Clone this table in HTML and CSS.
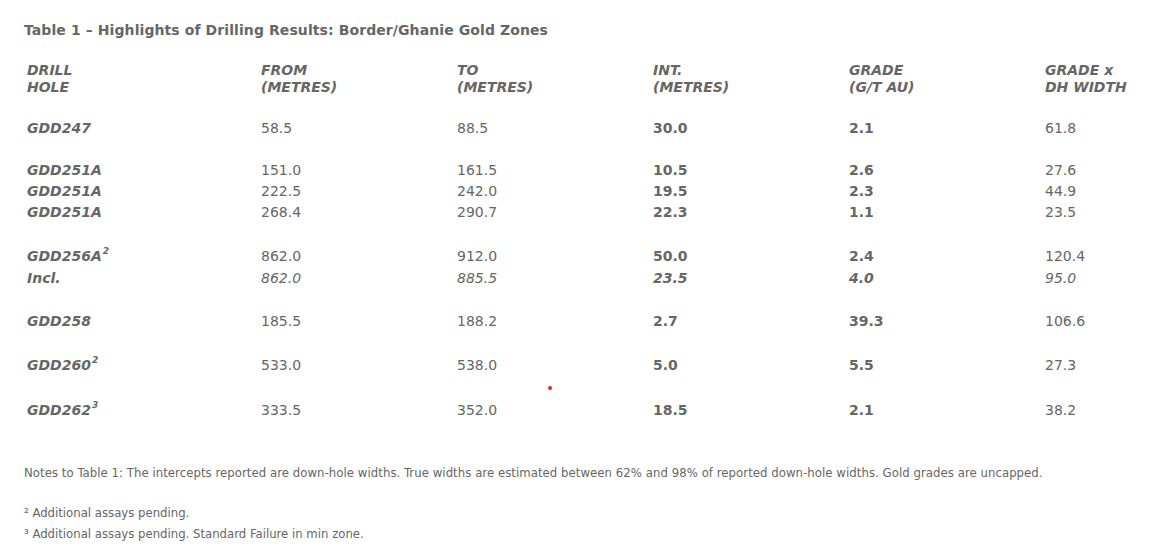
FILE: index.html
```html
<!DOCTYPE html>
<html>
<head>
<meta charset="utf-8">
<link rel="stylesheet" href="styles.css">
</head>
<body>
<div class="page">
  <h2 class="title">Table 1 – Highlights of Drilling Results: Border/Ghanie Gold Zones</h2>
  <div class="table">
    <div class="row head">
      <div>DRILL<br>HOLE</div>
      <div>FROM<br>(METRES)</div>
      <div>TO<br>(METRES)</div>
      <div>INT.<br>(METRES)</div>
      <div>GRADE<br>(G/T AU)</div>
      <div>GRADE x<br>DH WIDTH</div>
    </div>
    <div class="gap g22"></div>
    <div class="row"><div class="hole">GDD247</div><div>58.5</div><div>88.5</div><div class="b">30.0</div><div class="b">2.1</div><div>61.8</div></div>
    <div class="gap"></div>
    <div class="row"><div class="hole">GDD251A</div><div>151.0</div><div>161.5</div><div class="b">10.5</div><div class="b">2.6</div><div>27.6</div></div>
    <div class="row"><div class="hole">GDD251A</div><div>222.5</div><div>242.0</div><div class="b">19.5</div><div class="b">2.3</div><div>44.9</div></div>
    <div class="row"><div class="hole">GDD251A</div><div>268.4</div><div>290.7</div><div class="b">22.3</div><div class="b">1.1</div><div>23.5</div></div>
    <div class="gap g23"></div>
    <div class="row"><div class="hole">GDD256A<sup>2</sup></div><div>862.0</div><div>912.0</div><div class="b">50.0</div><div class="b">2.4</div><div>120.4</div></div>
    <div class="row it"><div class="hole">Incl.</div><div>862.0</div><div>885.5</div><div class="b">23.5</div><div class="b">4.0</div><div>95.0</div></div>
    <div class="gap g22"></div>
    <div class="row"><div class="hole">GDD258</div><div>185.5</div><div>188.2</div><div class="b">2.7</div><div class="b">39.3</div><div>106.6</div></div>
    <div class="gap g23"></div>
    <div class="row"><div class="hole">GDD260<sup>2</sup></div><div>533.0</div><div>538.0</div><div class="b">5.0</div><div class="b">5.5</div><div>27.3</div></div>
    <div class="gap g24"></div>
    <div class="row"><div class="hole">GDD262<sup>3</sup></div><div>333.5</div><div>352.0</div><div class="b">18.5</div><div class="b">2.1</div><div>38.2</div></div>
  </div>
  <p class="note">Notes to Table 1: The intercepts reported are down-hole widths. True widths are estimated between 62% and 98% of reported down-hole widths. Gold grades are uncapped.</p>
  <p class="foot">² Additional assays pending.</p>
  <p class="foot">³ Additional assays pending. Standard Failure in min zone.</p>
  <span class="dot"></span>
</div>
</body>
</html>
```
FILE: styles.css
```css
html, body {
  margin: 0;
  padding: 0;
  background: #fff;
}
.page {
  position: relative;
  padding: 20px 0 0 24px;
  color: #666;
  font-family: "DejaVu Sans Condensed", "DejaVu Sans", sans-serif;
  font-size: 13px;
}
.title {
  margin: 0 0 22px 0;
  font-family: "DejaVu Sans", sans-serif;
  font-weight: bold;
  font-size: 14px;
  line-height: 20px;
  letter-spacing: 0.09px;
}
.table {
  display: flex;
  flex-direction: column;
  padding-left: 3px;
}
.row {
  display: grid;
  grid-template-columns: 234px 196px 196px 196px 196px auto;
  line-height: 21px;
  font-family: "DejaVu Sans", sans-serif;
  font-size: 14px;
  white-space: nowrap;
}
.row.head {
  font-weight: bold;
  font-style: italic;
  font-size: 14px;
  line-height: 17px;
}
.gap {
  height: 21px;
}
.gap.g22 { height: 22px; }
.gap.g23 { height: 23px; }
.gap.g24 { height: 24px; }
.row.it {
  margin-top: 1px;
}
.hole {
  font-weight: bold;
  font-style: italic;
}
.b {
  font-weight: bold;
}
.it > div {
  font-style: italic;
}
sup {
  font-size: 9px;
  line-height: 0;
  vertical-align: 7px;
  margin-left: 1px;
}
.note {
  margin: 42px 0 0 0;
  line-height: 20px;
  letter-spacing: 0.055px;
}
.note + .foot {
  margin-top: 19px;
}
.foot {
  margin: 0;
  line-height: 21px;
}
.dot {
  position: absolute;
  left: 548px;
  top: 386px;
  width: 4px;
  height: 4px;
  border-radius: 50%;
  background: #e8261e;
}
```
